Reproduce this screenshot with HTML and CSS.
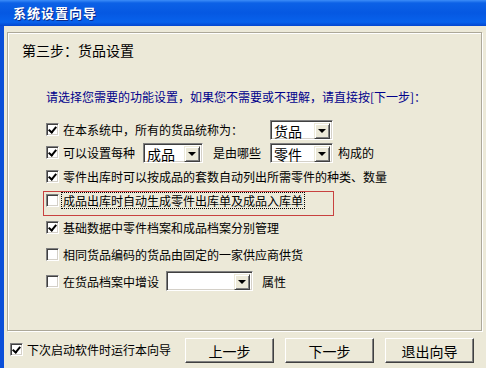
FILE: index.html
```html
<!DOCTYPE html>
<html lang="zh-CN">
<head>
    <meta charset="UTF-8">
    <title>系统设置向导</title>
    <link rel="stylesheet" href="styles.css">
</head>
<body>

<div class="window">
    <div class="titlebar">系统设置向导</div>

    <div class="frame">
        <div class="panel">
            <div class="step-title">第三步：货品设置</div>
            <div class="note">请选择您需要的功能设置，如果您不需要或不理解，请直接按[下一步]：</div>

            <div class="options">
                <div class="row row-1">
                    <span class="check on"></span>
                    <span>在本系统中，所有的货品统称为：</span>
                    <span class="combo w-63 gap-27"><span class="combo-text">货品</span><span class="combo-btn"></span></span>
                </div>
                <div class="row row-2">
                    <span class="check on"></span>
                    <span>可以设置每种</span>
                    <span class="combo w-60 gap-8"><span class="combo-text">成品</span><span class="combo-btn"></span></span>
                    <span class="gap-10">是由哪些</span>
                    <span class="combo w-63 gap-9"><span class="combo-text">零件</span><span class="combo-btn"></span></span>
                    <span class="gap-5">构成的</span>
                </div>
                <div class="row row-3">
                    <span class="check on"></span>
                    <span>零件出库时可以按成品的套数自动列出所需零件的种类、数量</span>
                </div>
                <div class="highlight">
                    <div class="row row-4">
                        <span class="check"></span>
                        <span class="focus">成品出库时自动生成零件出库单及成品入库单</span>
                    </div>
                </div>
                <div class="row row-5">
                    <span class="check on"></span>
                    <span>基础数据中零件档案和成品档案分别管理</span>
                </div>
                <div class="row row-6">
                    <span class="check"></span>
                    <span>相同货品编码的货品由固定的一家供应商供货</span>
                </div>
                <div class="row row-7">
                    <span class="check"></span>
                    <span>在货品档案中增设</span>
                    <span class="combo w-87 gap-7"><span class="combo-text"></span><span class="combo-btn"></span></span>
                    <span class="gap-9">属性</span>
                </div>
            </div>
        </div>

        <div class="footer">
            <div class="row">
                <span class="check on"></span>
                <span>下次启动软件时运行本向导</span>
            </div>
            <div class="buttons">
                <button class="button">上一步</button>
                <button class="button">下一步</button>
                <button class="button">退出向导</button>
            </div>
        </div>
    </div>
</div>

</body>
</html>
```

FILE: styles.css
```css
body {
    margin: 0;
    font-family: "Noto Sans CJK SC", "Noto Sans", sans-serif;
    font-size: 12px;
    color: #000;
    background-color: #ece9d8;
}
.window {
    width: 486px;
    height: 368px;
    display: flex;
    flex-direction: column;
    overflow: hidden;
}
.titlebar {
    height: 26px;
    line-height: 26px;
    padding-left: 13px;
    color: #fff;
    font-size: 13px;
    font-weight: bold;
    letter-spacing: 1px;
    text-shadow: 1px 1px #0a2a8a;
    background: linear-gradient(#3c8df8 0, #0c61e6 3px, #0558e2 50%, #0862ec 85%, #0447cf 100%);
}
.frame {
    flex: 1;
    border-left: 4px solid #0b4fd9;
    padding: 6px 4px 0 3px;
    display: flex;
    flex-direction: column;
}
.panel {
    height: 297px;
    border: 1px solid #aca899;
    box-shadow: inset 1px 1px #fff, 1px 1px #fff;
    padding-left: 14px;
}
.step-title {
    margin-top: 7px;
    height: 20px;
    line-height: 20px;
    font-size: 14px;
}
.note {
    margin-top: 29px;
    margin-left: 24px;
    height: 16px;
    line-height: 16px;
    color: #00008b;
}
.options {
    margin-top: 13px;
    margin-left: 24px;
}
.row {
    display: flex;
    align-items: center;
    white-space: nowrap;
}
.row-1 { height: 23px; }
.row-2 { height: 23px; }
.row-3 { height: 24px; margin-bottom: 3px; }
.row-4 { height: 16px; }
.row-5 { height: 23px; }
.row-6 { height: 30px; }
.row-7 { height: 24px; }

.highlight {
    width: 287px;
    height: 23px;
    margin-left: -3px;
    padding-left: 2px;
    border: 1px solid #c8413f;
}
.focus {
    outline: 1px dotted #000;
    outline-offset: 0;
    padding: 0 1px;
    margin-left: -1px;
    line-height: 15px;
}

/* casillas de verificación estilo clásico */
.check {
    box-sizing: border-box;
    width: 13px;
    height: 13px;
    flex: none;
    margin-right: 4px;
    background: #fff;
    border: 1px solid;
    border-color: #808080 #fff #fff #808080;
    box-shadow: inset 1px 1px #404040, inset -1px -1px #d4d0c8;
    position: relative;
}
.check.on::after {
    content: "";
    position: absolute;
    left: 3px;
    top: 1px;
    width: 3px;
    height: 6px;
    border: solid #000;
    border-width: 0 2px 2px 0;
    transform: rotate(40deg);
}

.combo {
    box-sizing: border-box;
    height: 20px;
    display: inline-flex;
    border: 1px solid;
    border-color: #808080 #fff #fff #808080;
    box-shadow: inset 1px 1px #404040, inset -1px -1px #d4d0c8;
    background: #fff;
    padding: 2px;
}
.combo-text {
    flex: 1;
    font-size: 14px;
    line-height: 16px;
    padding-left: 1px;
}
.combo-btn {
    box-sizing: border-box;
    width: 16px;
    height: 16px;
    background: #ece9d8;
    border: 1px solid;
    border-color: #ece9d8 #404040 #404040 #ece9d8;
    box-shadow: inset 1px 1px #fff, inset -1px -1px #808080;
    position: relative;
}
.combo-btn::after {
    content: "";
    position: absolute;
    left: 3px;
    top: 5px;
    border-left: 4px solid transparent;
    border-right: 4px solid transparent;
    border-top: 4px solid #000;
}
.w-60 { width: 60px; }
.w-63 { width: 63px; }
.w-87 { width: 87px; }
.gap-5 { margin-left: 5px; }
.gap-7 { margin-left: 7px; }
.gap-8 { margin-left: 8px; }
.gap-9 { margin-left: 9px; }
.gap-10 { margin-left: 10px; }
.gap-27 { margin-left: 27px; }

.footer {
    flex: 1;
    display: flex;
    align-items: center;
    padding: 0 8px 0 3px;
}
.buttons {
    margin-left: auto;
    display: flex;
    gap: 11px;
    padding-top: 2px;
}
.button {
    box-sizing: border-box;
    width: 89px;
    height: 25px;
    padding: 0;
    font-family: inherit;
    font-size: 14px;
    color: #000;
    background: #ece9d8;
    border: 1px solid;
    border-color: #fff #404040 #404040 #fff;
    box-shadow: inset -1px -1px #808080;
    cursor: pointer;
}
```
